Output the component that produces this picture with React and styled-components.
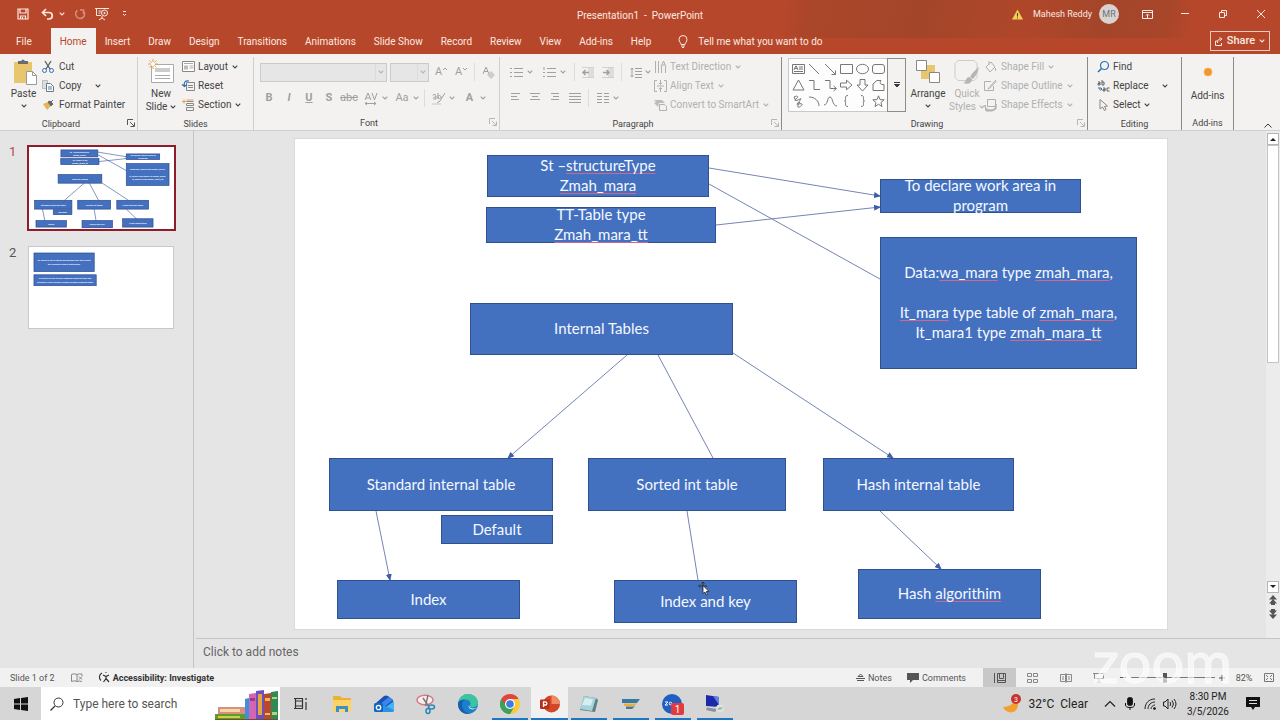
import React from "react";
import styled, { createGlobalStyle, css } from "styled-components";

const GlobalStyle = createGlobalStyle`
  *, *::before, *::after { box-sizing: border-box; }
  body {
    margin: 0;
    background: #e5e5e5;
    color: #3a3a3a;
    font: 10px/14px Roboto, "Noto Sans", sans-serif;
  }
  button, input, select, textarea {
    margin: 0;
    padding: 0;
    border: 0;
    border-radius: 0;
    background: none;
    color: inherit;
    font: inherit;
  }
`;

/* ---------- shared pieces ---------- */

const Page = styled.div`
  display: flex;
  flex-direction: column;
  min-height: 100vh;
`;

const Drawing = styled.svg`
  display: block;
  flex: none;
  overflow: visible;
`;

const Icon = ({ w = 14, h = w, box = `0 0 ${w} ${h}`, children, ...rest }) => (
  <Drawing width={w} height={h} viewBox={box} fill="none" stroke="currentColor" aria-hidden="true" {...rest}>
    {children}
  </Drawing>
);

const Chevron = () => (
  <Icon w={6} h={4}>
    <path d="M.7 .6 3 3 5.300 .6" strokeWidth="1.100" />
  </Icon>
);

const Row = styled.div`
  display: flex;
  align-items: center;
  gap: ${(p) => p.$gap || 0}px;
`;

/* ---------- title bar and tabs ---------- */

const Header = styled.header`
  color: #fbe9e2;
  background:
    linear-gradient(100deg, transparent 61%, rgba(60, 60, 40, 0.1) 63%, rgba(60, 60, 40, 0.16) 72%, rgba(60, 60, 40, 0.06) 80%, rgba(60, 60, 40, 0.16) 86%, rgba(60, 60, 40, 0.12) 91%, transparent 93%) 0 0 / 100% 38px no-repeat,
    #b7472a;
`;

const TitleBar = styled.div`
  display: grid;
  grid-template-columns: 1fr auto 1fr;
  align-items: center;
  height: 28px;
`;

const DocumentTitle = styled.span`
  padding-top: 3px;
`;

const QuickAccess = styled.div`
  display: flex;
  align-items: center;
  gap: 5px;
  padding-left: 12px;
`;

const BarButton = styled.button`
  display: flex;
  align-items: center;
  justify-content: center;
  gap: 5px;
  width: ${(p) => p.$w || 22}px;
  height: 22px;
  opacity: ${(p) => (p.disabled ? 0.45 : 1)};
`;

const WindowTools = styled.div`
  display: flex;
  align-items: center;
  justify-content: flex-end;
`;

const Account = styled.button`
  display: flex;
  align-items: center;
  gap: 10px;
  margin-right: 9px;
  font-size: 9px;
`;

const Avatar = styled.span`
  width: 20px;
  height: 20px;
  border-radius: 50%;
  background: #d8d3d1;
  color: #6d7478;
  font-size: 9px;
  line-height: 20px;
  text-align: center;
`;

const TabBar = styled.nav`
  display: flex;
  align-items: stretch;
  height: 26px;
  padding-left: 7px;
`;

const Tab = styled.button`
  padding: 2px 9px 0;
  white-space: nowrap;
  ${(p) =>
    p.$file &&
    css`
      margin-right: 10px;
    `}
  ${(p) =>
    p.$active &&
    css`
      background: #f3f2f1;
      color: #b7472a;
    `}
`;

const TellMe = styled.label`
  display: flex;
  align-items: center;
  flex: 1;
  gap: 10px;
  padding: 1px 0 0 18px;

  input {
    width: 180px;
    outline: 0;
  }
  input::placeholder {
    color: #fbe9e2;
    opacity: 1;
  }
`;

const ShareButton = styled.button`
  display: flex;
  align-items: center;
  justify-content: center;
  gap: 4px;
  align-self: center;
  width: 60px;
  height: 20px;
  margin-right: 10px;
  border: 1px solid #f0c9bc;
  font-size: 11px;
  font-weight: 500;
`;

/* ---------- ribbon ---------- */

const Ribbon = styled.section`
  display: flex;
  height: 77px;
  background: #f3f2f1;
  border-bottom: 1px solid #cfcfcf;
`;

const GroupBox = styled.div`
  display: flex;
  flex: none;
  flex-direction: column;
  width: ${(p) => p.$w}px;
  margin: 3px 0 0;
  border-right: 1px solid ${(p) => (p.$dark ? "#8a8a8a" : "#cfcfcf")};
`;

const GroupBody = styled.div`
  display: flex;
  height: 57px;
  padding-left: ${(p) => p.$pad || 0}px;
`;

const GroupFoot = styled.div`
  display: flex;
  flex: 1;
  align-items: center;
  justify-content: center;
  position: relative;
  padding: 3px ${(p) => (p.$launcher ? 15 : 0)}px 0 0;
  color: #444;
  font-size: 9px;
`;

const Launcher = styled.button`
  position: absolute;
  right: 2px;
  top: 5px;
  color: ${(p) => (p.$dim ? "#b5b5b5" : "#555")};
`;

const Stack = styled.div`
  display: flex;
  flex-direction: column;
`;

const Command = styled.button`
  display: flex;
  align-items: center;
  gap: ${(p) => p.$gap || 3}px;
  height: 19px;
  white-space: nowrap;
  color: ${(p) => (p.disabled ? "#b0b0b0" : "#444")};
`;

const Spread = styled.span`
  padding-left: ${(p) => p.$by}px;
`;

const BigButton = styled.button`
  display: flex;
  flex: none;
  flex-direction: column;
  align-items: center;
  width: ${(p) => p.$w}px;
  padding-top: 2px;
  line-height: 13px;
  color: ${(p) => (p.disabled ? "#b0b0b0" : "#444")};

  svg { margin-bottom: 2px; }
  svg:last-child { margin: 4px 0 0; }
`;

const Inline = styled.span`
  display: flex;
  align-items: center;
  gap: 3px;
  && svg { margin: 0; }
`;

const ToolRows = styled.div`
  display: flex;
  flex-direction: column;
  gap: 8px;
  padding-top: 6px;
`;

const ToolRow = styled.div`
  display: flex;
  align-items: center;
  gap: 2px;
  height: 18px;
`;

const Tool = styled.button`
  display: flex;
  align-items: center;
  justify-content: center;
  gap: ${(p) => p.$gap || 4}px;
  width: ${(p) => p.$w || 18}px;
  height: 18px;
  color: #a0a0a0;
  font-size: 11px;
  font-weight: ${(p) => (p.$bold ? 700 : 400)};
  font-style: ${(p) => (p.$italic ? "italic" : "normal")};
  text-decoration: ${(p) => p.$line || "none"};
`;

const Divider = styled.span`
  width: 1px;
  height: 18px;
  margin: 0 2px;
  background: #dcdcdc;
`;

const ComboBox = styled.span`
  display: flex;
  align-items: center;
  width: ${(p) => p.$w}px;
  height: 19px;
  margin-right: 1px;
  padding-right: 2px;
  border: 1px solid #cbcbcb;
  background: #e6e6e6;
  color: #b5b5b5;

  select {
    flex: 1;
    min-width: 0;
    height: 17px;
    margin-right: 2px;
    border-right: 1px solid #d6d6d6;
    appearance: none;
  }
`;

const Gallery = styled.div`
  display: grid;
  grid-template-columns: repeat(6, 16px);
  grid-template-rows: repeat(3, 16px);
  width: 99px;
  height: 54px;
  margin-top: 1px;
  padding: 2px 1px;
  border: 1px solid #c9c9c9;
  border-right: 0;
  background: #fdfdfd;
  color: #777;
`;

const ShapeButton = styled.button`
  display: grid;
  place-items: center;
`;

const GalleryMore = styled.button`
  display: grid;
  place-items: center;
  width: 19px;
  height: 54px;
  margin-top: 1px;
  border: 1px solid #8c8c8c;
`;

const CollapseRibbon = styled.button`
  align-self: flex-end;
  margin: 0 8px 2px auto;
`;

const Group = ({ label, w, pad, launcher, dim, dark, children }) => (
  <GroupBox $w={w} $dark={dark} role="group" aria-label={label}>
    <GroupBody $pad={pad}>{children}</GroupBody>
    <GroupFoot $launcher={launcher}>
      {label}
      {launcher && (
        <Launcher $dim={dim} aria-label={`${label} settings`}>
          <Icon w={8}>
            <path d="M.5 6V.5H6M3 3l4 4M7.5 3.500v4h-4" />
          </Icon>
        </Launcher>
      )}
    </GroupFoot>
  </GroupBox>
);

const Lines = ({ rows, w = 12, h = 10 }) => (
  <Icon w={w} h={h}>
    {rows.map(([a, b], i) => (
      <path key={i} d={`M${a} ${i * 3 + 0.5}H${b}`} />
    ))}
  </Icon>
);

const shapes = [
  ["Text box", <><path d="M.5 1.500h12v9H.5zM7 4h4M7 6h4M2 8.500h9" /><path d="M2 7l1.700-4h.6L6 7M3 5.500h2" /></>],
  ["Line", <path d="M1 1l10 10" />],
  ["Arrow line", <><path d="M1 1l10 10M11.500 7.500v4h-4" /></>],
  ["Rectangle", <path d="M.5 1.500h12v9H.5z" />],
  ["Ellipse", <ellipse cx="6.500" cy="6" rx="6" ry="4.700" />],
  ["Rounded rectangle", <rect x=".5" y="1.500" width="12" height="9" rx="2.500" />],
  ["Triangle", <path d="M6.500 1l5.500 10H1z" />],
  ["Elbow", <path d="M1 1.500h5v9h6" />],
  ["Elbow arrow", <path d="M1 1.500h5v8h6M9.500 7l3 2.500-3 2.500" />],
  ["Right arrow", <path d="M.5 4h6V1.200L12 6l-5.500 4.800V8h-6z" />],
  ["Down arrow", <path d="M4 .5v5.500H1L6.500 12 12 6H9V.5z" />],
  ["Freeform", <path d="M1 11.500V5l4-3.500h4c-2 3 0 4.500 3 4v6z" />],
  ["Scribble", <path d="M2 2c4-2 5 0 2 2s1 2 4 0-2 4-3 5 4-1 5 0-3 4-4 3 1-4 2-5M2 2l2 4" />],
  ["Curve", <path d="M1 2c6 0 10 4 10 9" />],
  ["Arc", <path d="M0 10c4 0 3-8 6-8s2 9 7 9" />],
  ["Left brace", <path d="M8 .5C3 .5 7.500 6 4.500 6 7.500 6 3 11.500 8 11.500" />],
  ["Right brace", <path d="M5 .5c5 0 .5 5.500 3.500 5.500C5.500 6 10 11.500 5 11.500" />],
  ["Star", <path d="M6.500.8 8 4.600l4.200.2-3.200 2.700 1 4-3.500-2.200L3 11.500l1-4L.8 4.800 5 4.600z" />],
];

/* ---------- slide data ---------- */

const nodes = [
  { x: 192, y: 16, w: 222, h: 42, lines: ["St –~structureType~", "~Zmah_mara~"] },
  { x: 191, y: 68, w: 230, h: 36, lines: ["TT-Table type", "~Zmah_mara_tt~"] },
  { x: 585, y: 40, w: 201, h: 34, lines: ["To declare work area in", "program"] },
  { x: 585, y: 98, w: 257, h: 132, lines: ["Data:~wa_mara~ type ~zmah_mara~,", "", "~It_mara~ type table of ~zmah_mara~,", "It_mara1 type ~zmah_mara_tt~"] },
  { x: 175, y: 164, w: 263, h: 52, lines: ["Internal Tables"] },
  { x: 34, y: 319, w: 224, h: 53, lines: ["Standard internal table"] },
  { x: 146, y: 376, w: 112, h: 29, lines: ["Default"] },
  { x: 293, y: 319, w: 198, h: 53, lines: ["Sorted int table"] },
  { x: 528, y: 319, w: 191, h: 53, lines: ["Hash internal table"] },
  { x: 42, y: 441, w: 183, h: 39, lines: ["Index"] },
  { x: 319, y: 441, w: 183, h: 43, lines: ["Index and key"] },
  { x: 563, y: 430, w: 183, h: 50, lines: ["Hash ~algorithim~"] },
];

const links = [
  { d: [414, 29, 585, 57], arrow: true },
  { d: [414, 45, 585, 140] },
  { d: [421, 86, 585, 68], arrow: true },
  { d: [332, 216, 213, 319], arrow: true },
  { d: [363, 216, 418, 319] },
  { d: [438, 214, 598, 319], arrow: true },
  { d: [81, 372, 95, 441], arrow: true },
  { d: [392, 372, 403, 441] },
  { d: [585, 372, 646, 430], arrow: true },
];

const secondSlide = [
  { x: 30, y: 36, w: 365, h: 113, lines: ["To allow in any system workbench will work with", "the allocate others instructed."] },
  { x: 30, y: 168, w: 377, h: 66, lines: ["To select in the typical instance was not give the", "problem if the record is using formed element table"] },
];

const plain = (line) => line.replaceAll("~", "");

const Connectors = ({ id }) => (
  <>
    <defs>
      <marker id={id} markerWidth="7" markerHeight="6" refX="6" refY="3" orient="auto" markerUnits="userSpaceOnUse">
        <path d="M0 0l7 3-7 3z" fill="#3f5fa8" stroke="none" />
      </marker>
    </defs>
    {links.map(({ d, arrow }) => (
      <line key={d.join()} x1={d[0]} y1={d[1]} x2={d[2]} y2={d[3]} markerEnd={arrow ? `url(#${id})` : undefined} />
    ))}
  </>
);

/* ---------- workspace ---------- */

const Workspace = styled.main`
  display: grid;
  grid-template-columns: 194px minmax(0, 1fr);
  flex: 1;
  background: #e5e5e5;
`;

const SlideList = styled.aside`
  display: flex;
  flex-direction: column;
  gap: 15px;
  padding: 14px 0 0 9px;
  border-right: 1px solid #c4c4c4;
`;

const SlideItem = styled.button`
  display: flex;
  align-items: flex-start;
  gap: 11px;
  color: ${(p) => (p.$active ? "#b04a55" : "#555")};
  font-size: 13px;
  line-height: 13px;
`;

const ThumbFrame = styled.span`
  border: ${(p) => (p.$active ? "2px solid #8e1c2b" : "1px solid #c9c9c9")};
  margin-left: ${(p) => (p.$active ? 0 : 1)}px;
  background: #fff;
`;

const Thumb = styled.svg`
  display: block;
  width: ${(p) => (p.$active ? 145 : 144)}px;
  height: ${(p) => (p.$active ? 82 : 81)}px;
  font-family: Lato, sans-serif;
  font-size: 15px;
  font-weight: 700;
`;

const Thumbnail = ({ items, active }) => (
  <ThumbFrame $active={active}>
    <Thumb $active={active} viewBox="0 0 872 490" aria-hidden="true">
      {active && (
        <g stroke="#4a62a0" strokeWidth="4">
          <Connectors id="thumb-arrow" />
        </g>
      )}
      {items.map((n) => (
        <g key={n.x + "-" + n.y}>
          <rect x={n.x} y={n.y} width={n.w} height={n.h} fill="#4470c0" stroke="#2c4a8a" strokeWidth="4" />
          {n.lines.map((line, i) => (
            <text key={i} x={n.x + n.w / 2} y={n.y + n.h / 2 + 5 + (i - (n.lines.length - 1) / 2) * 20} textAnchor="middle" fill="#fff">
              {plain(line)}
            </text>
          ))}
        </g>
      ))}
    </Thumb>
  </ThumbFrame>
);

const Editor = styled.div`
  display: flex;
  flex-direction: column;
  padding-left: 2px;
`;

const Stage = styled.div`
  display: flex;
  flex: 1;
`;

const Canvas = styled.div`
  display: flex;
  flex: 1;
  align-items: flex-start;
  justify-content: center;
  min-width: 0;
  padding: 8px 0;
  overflow: hidden;
`;

const Slide = styled.article`
  position: relative;
  flex: none;
  width: 872px;
  height: 490px;
  background: #fff;
  outline: 1px solid #dadada;
`;

const LinkLayer = styled.svg`
  position: absolute;
  inset: 0;
  width: 100%;
  height: 100%;
  stroke: #7485b4;
`;

const Node = styled.div`
  position: absolute;
  left: ${(p) => p.$x}px;
  top: ${(p) => p.$y}px;
  width: ${(p) => p.$w}px;
  height: ${(p) => p.$h}px;
  display: flex;
  flex-direction: column;
  align-items: center;
  justify-content: center;
  padding-bottom: 2px;
  border: 1px solid #2f528f;
  background: #4470c0;
  color: #f4f8ff;
  font: 15px/20px Lato, sans-serif;
  white-space: nowrap;
`;

const NodeLine = styled.div`
  flex: none;
  height: 20px;
`;

const Misspelt = styled.span`
  text-decoration: underline solid #d0688c 1px;
  text-underline-offset: 2px;
  text-decoration-skip-ink: none;
`;

const Pointer = styled(Drawing)`
  position: absolute;
  left: 403px;
  top: 443px;
`;

const ScrollBar = styled.div`
  display: flex;
  flex-direction: column;
  align-items: center;
  width: 14px;
  padding: 2px 0 17px;
  background: #ececec;
`;

const ScrollButton = styled.button`
  display: grid;
  place-items: center;
  width: 12px;
  height: ${(p) => (p.$jump ? 14 : 12)}px;
  border: ${(p) => (p.$jump ? 0 : "1px solid #b5b5b5")};
  background: ${(p) => (p.$jump ? "none" : "#fff")};
  color: #333;
`;

const ScrollTrack = styled.div`
  flex: 1;
  width: 12px;
`;

const ScrollThumb = styled.div`
  height: 50%;
  border: 1px solid #c4c4c4;
  background: #fff;
`;

const Notes = styled.input`
  height: 30px;
  padding: 0 7px 3px;
  border-top: 1px solid #c4c4c4;
  font-size: 12px;
  &::placeholder { color: #666; opacity: 1; }
`;

/* ---------- status bar ---------- */

const StatusBar = styled.footer`
  position: relative;
  display: flex;
  align-items: center;
  height: 19px;
  background: #f2f1f1;
  font-size: 9px;
  color: #555;
`;

const StatusButton = styled.button`
  display: flex;
  align-items: center;
  justify-content: center;
  gap: 3px;
  height: 19px;
  width: ${(p) => (p.$w ? `${p.$w}px` : "auto")};
  margin-left: ${(p) => p.$ml || 0}px;
  background: ${(p) => (p.$active ? "#c8c8c8" : "none")};
  font-weight: ${(p) => (p.$bold ? 700 : 400)};
  color: ${(p) => (p.$bold ? "#333" : "#555")};
`;

const SlideCount = styled.span`
  padding-left: 10px;
`;

const StatusEnd = styled.div`
  display: flex;
  align-items: center;
  margin-left: auto;
`;

const ZoomSlider = styled.input`
  width: 84px;
  height: 12px;
  appearance: none;
  background: linear-gradient(#777, #777) center / 100% 1px no-repeat;
  &::-webkit-slider-thumb {
    appearance: none;
    width: 4px;
    height: 10px;
    background: #555;
  }
`;

const Watermark = styled.div`
  position: absolute;
  right: 48px;
  bottom: 6px;
  color: rgba(255, 255, 255, 0.6);
  font: 400 58px/40px Lato, sans-serif;
  -webkit-text-stroke: 1px rgba(255, 255, 255, 0.6);
  pointer-events: none;
`;

/* ---------- taskbar ---------- */

const TaskBar = styled.nav`
  display: flex;
  align-items: stretch;
  height: 33px;
  background: #d6d6d6;
  color: #222;
`;

const StartButton = styled.button`
  display: grid;
  place-items: center;
  width: 41px;
`;

const SearchBox = styled.label`
  display: flex;
  align-items: center;
  gap: 9px;
  width: 239px;
  padding-left: 9px;
  overflow: hidden;
  background: #fff;

  input {
    flex: 1;
    min-width: 0;
    outline: 0;
    font-size: 12px;
  }
  input::placeholder { color: #555; opacity: 1; }
`;

const AppRow = styled.div`
  display: flex;
  flex: 0 1 415px;
`;

const TaskButton = styled.button`
  display: grid;
  flex: ${(p) => (p.$w ? "none" : "1")};
  place-items: center;
  width: ${(p) => p.$w}px;
  background: ${(p) => (p.$active ? "#f1f1f1" : "none")};
  box-shadow: ${(p) => (p.$open ? "inset 0 -2px #1f74c4" : "none")};
  border: solid transparent;
  border-width: 0 ${(p) => (p.$active ? 0 : 3)}px;
  background-clip: padding-box;
`;

const Tray = styled.div`
  display: flex;
  align-items: center;
  gap: 4px;
  margin-left: auto;
  padding-right: 19px;
`;

const Weather = styled.button`
  display: flex;
  align-items: center;
  gap: 7px;
  margin-right: 10px;
  font-size: 12px;
  white-space: pre;
`;

const TrayButton = styled.button`
  display: grid;
  place-items: center;
  width: 16px;
  height: 24px;
`;

const Clock = styled.time`
  width: 48px;
  margin: 0 9px 0 2px;
  font-size: 10px;
  line-height: 15px;
  text-align: center;
`;

const FolderIcon = () => (
  <Icon w={20} h={18} stroke="none">
    <path d="M1 1h7l2 2h9v13H1z" fill="#e9b233" />
    <path d="M1 5h18v12H1z" fill="#fbd367" />
    <path d="M4 17v-6h12v6h-3v-3H7v3z" fill="#3f8fc7" />
  </Icon>
);
const OutlookIcon = () => (
  <Icon w={20} h={18} stroke="none">
    <path d="M2 8 10 1q2-1 4 0l5 4v11H4z" fill="#1d4fb8" />
    <path d="M6 9 15 2l4 3-9 7z" fill="#3b86e8" />
    <path d="M5 17 20 6v9q0 2-2 2z" fill="#45b4f2" />
    <path d="M9 10l11 5q0 2-2 2H7z" fill="#2a93e4" />
    <rect x="0" y="8" width="9" height="9" rx="1.500" fill="#1266c0" />
    <circle cx="4.500" cy="12.500" r="2.200" stroke="#fff" strokeWidth="1.300" />
  </Icon>
);
const SnipIcon = () => (
  <Icon w={20} h={20}>
    <ellipse cx="9" cy="6" rx="8" ry="4.800" stroke="#d77a86" strokeWidth="1.500" fill="#f7eeee" />
    <path d="M12 1 9.500 12M7 4l6 9" stroke="#777" strokeWidth="1.400" />
    <ellipse cx="12" cy="17" rx="2" ry="2.500" stroke="#2b88b8" strokeWidth="1.500" />
    <ellipse cx="15.500" cy="13" rx="3" ry="1.900" stroke="#2b88b8" strokeWidth="1.500" />
  </Icon>
);
const EdgeIcon = () => (
  <Icon w={20} h={20} stroke="none">
    <circle cx="10" cy="10" r="10" fill="#1b7fc9" />
    <path d="M.5 8C2 2.500 6 0 10 0c6 0 10 4 10 8.500 0 3.500-3 5-6 5-2 0-3-1-2-2 2-3-1-6-4.500-6C4 5.500 1.500 6.500.5 8z" fill="#3cc4a0" />
    <path d="M.5 8C2 6.500 4 5.500 7 5.500c-3 2-3.500 5-2.500 8s4 6 8 6C6 21.500 0 17 0 10z" fill="#1560ae" />
    <path d="M11.500 11c-1 2 1 3.500 4 3.500 2 0 3-.5 4-1 0 0-3 3-7 1.500-2-.8-2.500-3-1-4z" fill="#e6eef2" />
  </Icon>
);
const ChromeIcon = () => (
  <Icon w={20} h={20} stroke="none">
    <path d="M10 10 1.340 5A10 10 0 0 1 18.660 5z" fill="#e0443a" />
    <path d="M10 10 18.660 5A10 10 0 0 1 10 20z" fill="#f9c83c" />
    <path d="M10 10 10 20A10 10 0 0 1 1.340 5z" fill="#3ba358" />
    <path d="M10 5h8.660l-3.500 7z" fill="#f9c83c" />
    <path d="M14.330 12.500 10 20l-3-6z" fill="#3ba358" />
    <path d="M5.670 12.500 1.340 5 10 5z" fill="#e0443a" />
    <path d="M5.670 12.500 1.340 5A10 10 0 0 0 10 20l2-4z" fill="#3ba358" />
    <circle cx="10" cy="10" r="5" fill="#fff" />
    <circle cx="10" cy="10" r="3.800" fill="#3b7de0" />
  </Icon>
);
const PowerPointIcon = () => (
  <Icon w={20} h={18} stroke="none">
    <circle cx="11.500" cy="9" r="8.500" fill="#d24726" />
    <path d="M11.500.5A8.500 8.500 0 0 1 20 9h-8.500z" fill="#f08a63" />
    <rect x="0" y="4.500" width="9.500" height="9.500" rx="1" fill="#b7301c" />
    <path d="M3.500 12V6.800h1.800a1.500 1.500 0 0 1 0 3.200H3.500" stroke="#fff" strokeWidth="1.300" />
  </Icon>
);
const NotepadIcon = () => (
  <Icon w={20} h={18} stroke="none">
    <path d="M5 1l12 2 2 2-3 12L1 15z" fill="#5f7f86" />
    <path d="M5 1l12 2-4 13L1 14z" fill="#a6d3da" />
    <path d="M6 3l8 1.500-2 6L3 10z" fill="#d6eef0" />
  </Icon>
);
const SapIcon = () => (
  <Icon w={20} h={12} stroke="none">
    <path d="M1 1h18l-3 4H1z" fill="#3679a8" />
    <path d="M3 5.500h13L13 8H3z" fill="#e8b23a" />
    <path d="M5 8.500h9L11 11H5z" fill="#56748c" />
  </Icon>
);
const MeetingIcon = () => (
  <Icon w={22} h={20} stroke="none">
    <circle cx="10" cy="10" r="10" fill="#1f5fc4" />
    <path d="M3 8h3L3 11h3" stroke="#fff" />
    <circle cx="8.500" cy="9.500" r="1.300" stroke="#fff" />
    <rect x="9" y="9" width="13" height="12" rx="2" fill="#e23b3f" />
    <text x="15.500" y="19" textAnchor="middle" fill="#fff" fontSize="10">1</text>
  </Icon>
);
const RemoteIcon = () => (
  <Icon w={20} h={18} stroke="none">
    <path d="M1 0l13 2v10L1 11z" fill="#1b2aa8" />
    <path d="M8 1l6 1v8z" fill="#5b83e0" />
    <path d="M2 12.500l10 1.500-2 3-9-2z" fill="#8a929c" />
    <circle cx="15" cy="13.500" r="4" fill="#dfe3df" />
    <path d="M13 14.500l2-2M15 14.500l2-2" stroke="#3a8d4a" />
  </Icon>
);

const apps = [
  ["File Explorer", FolderIcon],
  ["Outlook", OutlookIcon],
  ["Snipping Tool", SnipIcon],
  ["Edge", EdgeIcon],
  ["Chrome", ChromeIcon, true],
  ["PowerPoint", PowerPointIcon, true, true],
  ["Notepad", NotepadIcon, true],
  ["SAP Logon", SapIcon, true],
  ["Zoom", MeetingIcon, true],
  ["Remote Desktop", RemoteIcon, true],
];

const Books = () => (
  <Icon w={66} h={33} box="0 -3 66 33" stroke="none">
    <path d="M4 17h27v7H4z" fill="#d98d83" /><path d="M6 19h20v3H6z" fill="#f0d9a0" />
    <path d="M1 24h30v6H1z" fill="#5f9c28" /><path d="M4 26h22v2H4z" fill="#c7d34a" />
    <path d="M31 9l4-1v22h-4z" fill="#3d8fe0" />
    <path d="M35 4l7-1v27h-7z" fill="#d266b5" /><path d="M36 8h5v3h-5z" fill="#8f3f8a" />
    <path d="M42 1l8-1v30h-8z" fill="#6b4fc4" /><path d="M44 4h4v21h-4z" fill="#e4a63c" />
    <path d="M50 4l7-1v27h-7z" fill="#b9482f" /><path d="M51 8h5v3h-5zM51 23h5v2h-5z" fill="#edbb5a" />
    <path d="M57 2l7-1v29h-7z" fill="#2f8a55" /><path d="M58 7h5v2h-5zM58 22h5v3h-5z" fill="#b6d477" />
    <path d="M1 29h63v1H1z" fill="#76502a" />
  </Icon>
);

/* ---------- assembled areas ---------- */

const tabs = ["Insert", "Draw", "Design", "Transitions", "Animations", "Slide Show", "Record", "Review", "View", "Add-ins", "Help"];

const TopBar = () => (
  <Header>
    <TitleBar>
      <QuickAccess>
        <BarButton aria-label="Save">
          <Icon w={12}><path d="M1 1h10v10H1zM3 1v4h6V1M3.500 11V8h5v3M5.500 9v2" strokeWidth="1.200" /></Icon>
        </BarButton>
        <BarButton $w={28} aria-label="Undo">
          <Icon w={13} h={12}><path d="M5 1 1.500 4.500 5 8M1.500 4.500H8a3.200 3.200 0 0 1 0 6.500H6" strokeWidth="1.700" /></Icon>
          <Chevron />
        </BarButton>
        <BarButton $w={16} disabled aria-label="Redo">
          <Icon w={12}><path d="M3.500 2.300A4.500 4.500 0 1 0 9 2.500M9.500 6V2H6" strokeWidth="1.500" /></Icon>
        </BarButton>
        <BarButton $w={18} aria-label="Start from beginning">
          <Icon w={14}><path d="M0 1.500h14M1.500 1.500v7H6M7 9v3M4 13l3-2 3 2M3.500 4h3M3.500 6h2" /><circle cx="9.500" cy="6" r="3" /><path d="M8.700 4.500v3l2.300-1.500z" fill="currentColor" stroke="none" /></Icon>
        </BarButton>
        <BarButton $w={16} aria-label="Customize quick access">
          <Icon w={5} h={6}><path d="M1 .5h3M1 3l1.500 1.500L4 3" /></Icon>
        </BarButton>
      </QuickAccess>
      <DocumentTitle>Presentation1&nbsp; -&nbsp; PowerPoint</DocumentTitle>
      <WindowTools>
        <Account>
          <Icon w={11} h={11} stroke="none"><path d="M5.500.5 11 10.500H0z" fill="#f3cf56" /><path d="M5 4h1v3.500H5zM5 8.500h1v1H5z" fill="#4a3a10" /></Icon>
          <Row $gap={7}><span>Mahesh Reddy</span><Avatar>MR</Avatar></Row>
        </Account>
        <BarButton $w={38} aria-label="Ribbon display options">
          <Icon w={11} h={9}><path d="M.5.5h10v8H.5zM.5 2.500h10M5.500 8V4.500M4 5.500l1.500-1.500L7 5.500" /></Icon>
        </BarButton>
        <BarButton $w={38} aria-label="Minimize"><Icon w={8} h={2}><path d="M0 .5h8" /></Icon></BarButton>
        <BarButton $w={38} aria-label="Restore"><Icon w={8} h={8}><path d="M.5 2.500h5v5h-5zM2.500 2.500v-2h5v5h-2" /></Icon></BarButton>
        <BarButton $w={38} aria-label="Close"><Icon w={8}><path d="M0 0l8 8M8 0L0 8" /></Icon></BarButton>
      </WindowTools>
    </TitleBar>
    <TabBar>
      <Tab $file>File</Tab>
      <Tab $active>Home</Tab>
      {tabs.map((t) => <Tab key={t}>{t}</Tab>)}
      <TellMe>
        <Icon w={10} h={13}><path d="M3 9.500C3 7.500 1 7 1 4.500a4 4 0 0 1 8 0C9 7 7 7.500 7 9.500zM3 11h4M4 12.500h2" /></Icon>
        <input aria-label="Tell me what you want to do" placeholder="Tell me what you want to do" />
      </TellMe>
      <ShareButton>
        <Icon w={8} h={9}><path d="M2.500 4H.5v4.500h6V6M2.500 6c0-3 1-4 3-4M4.500.5 7 2 4.500 4" /></Icon>
        Share
        <Chevron />
      </ShareButton>
    </TabBar>
  </Header>
);

const AlignLines = [
  ["Align left", [[2, 11], [2, 8], [2, 10]]],
  ["Center", [[1, 11], [3, 9], [1, 11]]],
  ["Align right", [[2, 10], [4, 10], [2, 10]]],
  ["Justify", [[0, 12], [0, 12], [0, 12], [0, 12]]],
];

const RibbonBar = () => (
  <Ribbon>
    <Group label="Clipboard" w={138} pad={5} launcher>
      <BigButton $w={37}>
        <Icon w={26} h={26} stroke="none">
          <path d="M3 3h18v21H3z" fill="#e8c66e" />
          <path d="M7 5V2h3q2-3 4 0h3v3z" fill="#6b6b6b" />
          <path d="M15.500 12.500h6l4 4v9h-10z" fill="#fff" stroke="#999" />
          <path d="M21.500 12.500v4h4" stroke="#999" />
        </Icon>
        Paste
        <Chevron />
      </BigButton>
      <Stack>
        <Command $gap={5}>
          <Icon w={12}><path d="M3 0l5 8M9 0 4 8" stroke="#555" strokeWidth="1.200" /><circle cx="2.500" cy="9.500" r="2" stroke="#2f6fb3" /><circle cx="9.500" cy="9.500" r="2" stroke="#2f6fb3" /></Icon>
          Cut
        </Command>
        <Command $gap={5}>
          <Icon w={12}><path d="M.5.5h5v8h-5z" fill="#ddd" stroke="#bbb" /><path d="M4.500 3.500h4l3 3v5h-7zM6 7h4M6 9h4" stroke="#5d7893" fill="#fff" /></Icon>
          Copy
          <Spread $by={8}><Chevron /></Spread>
        </Command>
        <Command $gap={5}>
          <Icon w={12}><path d="M1 5l5-2 3 4-4 4z" fill="#e4b659" stroke="none" /><path d="M6 3l3 4 2-2-3-3zM9 3l2-2" fill="#666" stroke="#666" /></Icon>
          Format Painter
        </Command>
      </Stack>
    </Group>

    <Group label="Slides" w={116} pad={2}>
      <BigButton $w={42}>
        <Icon w={26} h={26}>
          <path d="M3.500 5.500h22v18h-22z" fill="#fff" stroke="#aaa" />
          <path d="M7 9h15v4H7z" fill="#ccc" stroke="none" />
          <path d="M7 16.500h15M7 19.500h15" stroke="#aaa" />
          <path d="M5 0v10M0 5h10M1.500 1.500l7 7M8.500 1.500l-7 7" stroke="#e3a34a" />
          <circle cx="5" cy="5" r="2" fill="#fff" stroke="none" />
        </Icon>
        New
        <Inline>Slide <Chevron /></Inline>
      </BigButton>
      <Stack>
        <Command>
          <Icon w={13} h={11}><path d="M.5.5h12v10H.5z" fill="#fff" stroke="#888" /><path d="M2 2.500h9M7.500 5h4M7.500 7h4" stroke="#aaa" /><path d="M2 4.500h4v4H2z" fill="#bbb" stroke="none" /></Icon>
          <Row $gap={4}>Layout <Chevron /></Row>
        </Command>
        <Command>
          <Icon w={13} h={12}><path d="M4.500 2.500h8v8h-8zM6 5.500h5M6 7.500h5" stroke="#888" /><path d="M7 1C3 0 1.500 3 2.500 6M0 4.500l2.500 2L5 4.500" stroke="#2f6fb3" strokeWidth="1.200" /></Icon>
          Reset
        </Command>
        <Command>
          <Icon w={13} h={12}><path d="M4.500 2.500h7M4.500 4.500h7v2h-7zM4.500 8.500h7v3h-7z" stroke="#888" /><path d="M0 2.500h4M2 .5v4M4.500 1h7" stroke="#e3a34a" /></Icon>
          <Row $gap={4}>Section <Chevron /></Row>
        </Command>
      </Stack>
    </Group>

    <Group label="Font" w={246} pad={6} launcher dim>
      <ToolRows>
        <ToolRow>
          <ComboBox $w={127}><select disabled aria-label="Font name"><option /></select><Chevron /></ComboBox>
          <ComboBox $w={39}><select disabled aria-label="Font size"><option /></select><Chevron /></ComboBox>
          <Tool disabled $gap={1} aria-label="Increase font size">A<Icon w={4} h={10}><path d="M0 3l2-2 2 2" /></Icon></Tool>
          <Tool disabled $gap={1} aria-label="Decrease font size">A<Icon w={4} h={10}><path d="M0 1l2 2 2-2" /></Icon></Tool>
          <Divider />
          <Tool disabled aria-label="Clear formatting">
            <Icon w={13} h={13}><path d="M1 8 4 1l3 7M2 5.500h4" /><path d="M5 9l4-4 4 4-4 4z" fill="#ccc" stroke="none" /></Icon>
          </Tool>
        </ToolRow>
        <ToolRow>
          <Tool disabled $bold aria-label="Bold">B</Tool>
          <Tool disabled $bold $italic aria-label="Italic">I</Tool>
          <Tool disabled $bold $line="underline" aria-label="Underline">U</Tool>
          <Tool disabled $bold aria-label="Text shadow">S</Tool>
          <Tool disabled $line="line-through" aria-label="Strikethrough">abc</Tool>
          <Tool disabled $w={32} aria-label="Character spacing">
            <Icon w={14} h={13}><path d="M1 8 4 1l3 7M2 6h4M8 1l2.500 7L13 1M1 11.500h11M3 10l-2 1.500L3 13M10 10l2 1.500-2 1.500" /></Icon>
            <Chevron />
          </Tool>
          <Tool disabled $w={26} aria-label="Change case">Aa<Chevron /></Tool>
          <Divider />
          <Tool disabled $w={28} aria-label="Highlight colour">
            <Icon w={13}><path d="M1 3.500C1 2 4 2 4 4v3C1 8 0 5 4 5M6 1v6M6 5c0-2 3-2 3 0s-3 2-3 0M13 1 8 9l-3 2" /><path d="M0 11h9v2H0z" fill="#ddd" stroke="none" /></Icon>
            <Chevron />
          </Tool>
          <Tool disabled $bold $w={34} aria-label="Font colour">A<Spread $by={3}><Chevron /></Spread></Tool>
        </ToolRow>
      </ToolRows>
    </Group>

    <Group label="Paragraph" w={282} pad={6} launcher dim dark>
      <ToolRows>
        <ToolRow>
          <Tool disabled $w={30} aria-label="Bullets">
            <Icon w={13} h={11}><path d="M4 1.500h9M4 5.500h9M4 9.500h9M0 1.500h2M0 5.500h2M0 9.500h2" /></Icon><Chevron />
          </Tool>
          <Tool disabled $w={32} aria-label="Numbering">
            <Icon w={13} h={11}><path d="M4 1.500h9M4 5.500h9M4 9.500h9M1 0v3M0 5.500h2M0 9.500h2" /></Icon><Chevron />
          </Tool>
          <Divider />
          <Tool disabled aria-label="Decrease indent">
            <Icon w={12} h={11}><path d="M6 1h6v9H6z" fill="#ddd" stroke="none" /><path d="M7 5.500H1M3.500 3 1 5.500 3.500 8" strokeWidth="1.500" /><path d="M0 .5h12M0 10.500h12" stroke="#d0d0d0" /></Icon>
          </Tool>
          <Tool disabled aria-label="Increase indent">
            <Icon w={12} h={11}><path d="M6 1h6v9H6z" fill="#ddd" stroke="none" /><path d="M1 5.500h6M4.500 3 7 5.500 4.500 8" strokeWidth="1.500" /><path d="M0 .5h12M0 10.500h12" stroke="#d0d0d0" /></Icon>
          </Tool>
          <Divider />
          <Tool disabled $w={28} $gap={3} aria-label="Line spacing">
            <Icon w={12} h={11}><path d="M5 1.500h7M5 4.500h7M5 7.500h7M5 10.500h7M2 1v9M.5 2.500 2 1l1.500 1.500M.5 8.500 2 10l1.500-1.500" /></Icon><Chevron />
          </Tool>
        </ToolRow>
        <ToolRow>
          {AlignLines.map(([name, rows]) => (
            <Tool key={name} disabled aria-label={name}><Lines rows={rows} /></Tool>
          ))}
          <Divider />
          <Tool disabled $w={30} aria-label="Columns">
            <Icon w={12} h={10}><path d="M0 .5h5M7 .5h5M0 3.500h5M7 3.500h5M0 6.500h5M7 6.500h5M0 9.500h5M7 9.500h5" /></Icon><Chevron />
          </Tool>
        </ToolRow>
      </ToolRows>
      <Stack>
        <Command disabled>
          <Icon w={13} h={12}><path d="M1.500 0v12M4.500 0v12M7.500 6v6M11.500 6v6M7 6l2.500-6L12 6M8 4h3" /></Icon>
          <Row $gap={4}>Text Direction <Chevron /></Row>
        </Command>
        <Command disabled>
          <Icon w={13} h={12}><path d="M3 .5H.5v11H3M10 .5h2.500v11H10M3 6h7M6.500 0v4M5 3l1.500 1.500L8 3M6.500 12V8M5 9l1.500-1.500L8 9" /></Icon>
          <Row $gap={4}>Align Text <Chevron /></Row>
        </Command>
        <Command disabled>
          <Icon w={13} h={12}><path d="M0 1h8l3 3H5l-1 4-4-4 2-1z" fill="#bbb" stroke="none" /><path d="M5.500 5.500h5l2 2v4h-7z" fill="#f3f2f1" /></Icon>
          <Row $gap={4}>Convert to SmartArt <Chevron /></Row>
        </Command>
      </Stack>
    </Group>

    <Group label="Drawing" w={306} pad={6} launcher dim dark>
      <Gallery>
        {shapes.map(([name, art]) => (
          <ShapeButton key={name} aria-label={name}><Icon w={13} h={12}>{art}</Icon></ShapeButton>
        ))}
      </Gallery>
      <GalleryMore aria-label="More shapes"><Icon w={6} h={6}><path d="M0 .5h6M.5 2.500 3 5l2.500-2.500z" fill="currentColor" /></Icon></GalleryMore>
      <BigButton $w={44}>
        <Icon w={24} h={26}>
          <path d="M11 6h8v8h-8zM5 12h9v8H5z" fill="#e8c66e" stroke="none" />
          <path d="M.5 1.500h10v10H.5zM13.500 13.500h10v10h-10z" fill="#fff" stroke="#888" />
        </Icon>
        Arrange
        <Chevron />
      </BigButton>
      <BigButton $w={34} disabled>
        <Icon w={26} h={26}>
          <path d="M4 1.500h16l3 3v14l-3 3H4l-3-3v-14z" stroke="#ccc" />
          <path d="M25 8c-4 3-7 6-9 10l3 2c3-3 5-7 6-12zM15 18c-4 1-2 5-6 6 5 2 9 0 9-4z" fill="#b5b5b5" stroke="none" />
        </Icon>
        Quick
        <Inline>Styles <Chevron /></Inline>
      </BigButton>
      <Stack>
        <Command disabled $gap={4}>
          <Icon w={13} h={12}><path d="M2 6l5-5 4 5-5 5zM5 0v4M11.500 7v3" /></Icon>
          <Row $gap={4}>Shape Fill <Chevron /></Row>
        </Command>
        <Command disabled $gap={4}>
          <Icon w={13} h={12}><path d="M7 1.500H.5v9h9V6M12 0 5 7.500 4 9l1.500-.6L12.500 1" /></Icon>
          <Row $gap={4}>Shape Outline <Chevron /></Row>
        </Command>
        <Command disabled $gap={4}>
          <Icon w={13} h={12}><path d="M1 6q0 5 6 5 5 0 5-6v5l-4 2H2z" fill="#bbb" /><path d="M3.500.5h8v7h-8z" fill="#f3f2f1" /></Icon>
          <Row $gap={4}>Shape Effects <Chevron /></Row>
        </Command>
      </Stack>
    </Group>

    <Group label="Editing" w={94} pad={9} dark>
      <Stack>
        <Command>
          <Icon w={13} h={12}><circle cx="7.500" cy="4.500" r="4" stroke="#2f6fb3" strokeWidth="1.200" /><path d="M4.500 7.500 1 11" stroke="#2f6fb3" strokeWidth="1.600" /></Icon>
          Find
        </Command>
        <Command>
          <Icon w={13} h={13}><path d="M1 3h2v3H1V4.500h2M5 1v5h2V3H5M6 9h2v3H6v-1.500h2M12.500 9H10v3h2.500" stroke="#555" strokeWidth=".9" /><path d="M2 8v2h3M3.500 8.500 5 10l-1.500 1.500" stroke="#2f6fb3" /></Icon>
          Replace
          <Spread $by={10}><Chevron /></Spread>
        </Command>
        <Command>
          <Icon w={13} h={12}><path d="M3 .5v9.500l2.500-2 2 3.500 1.500-1-1.500-3L10.500 7z" stroke="#888" /></Icon>
          <Row $gap={4}>Select <Chevron /></Row>
        </Command>
      </Stack>
    </Group>

    <Group label="Add-ins" w={52} dark>
      <BigButton $w={51}>
        <Icon w={26} h={26}><circle cx="13" cy="9" r="4" fill="#f09a2c" stroke="#f6b35c" /></Icon>
        Add-ins
      </BigButton>
    </Group>
    <CollapseRibbon aria-label="Collapse the ribbon"><Icon w={8} h={5}><path d="M.5 4.500 4 1l3.500 3.500" /></Icon></CollapseRibbon>
  </Ribbon>
);

const renderLine = (line) =>
  line.split("~").map((part, i) => (i % 2 ? <Misspelt key={i}>{part}</Misspelt> : part));

const WorkArea = () => (
  <Workspace>
    <SlideList aria-label="Slides">
      <SlideItem $active>1<Thumbnail items={nodes} active /></SlideItem>
      <SlideItem>2<Thumbnail items={secondSlide} /></SlideItem>
    </SlideList>
    <Editor>
      <Stage>
        <Canvas>
          <Slide>
            <LinkLayer aria-hidden="true"><Connectors id="arrow" /></LinkLayer>
            {nodes.map((n) => (
              <Node key={n.lines[0]} $x={n.x} $y={n.y} $w={n.w} $h={n.h}>
                {n.lines.map((line, i) => <NodeLine key={i}>{renderLine(line)}</NodeLine>)}
              </Node>
            ))}
            <Pointer width="13" height="14" viewBox="0 0 13 14" aria-hidden="true">
              <path d="M1 4h8M5 0v8M3.500 1.500 5 0l1.500 1.500M2 2.500.5 4 2 5.500" stroke="#333" fill="none" />
              <path d="M5 3.500v8l2-1.500 1.200 3 1.300-.5-1.200-3H11z" fill="#fff" stroke="#222" strokeWidth=".8" />
            </Pointer>
          </Slide>
        </Canvas>
        <ScrollBar>
          <ScrollButton aria-label="Scroll up"><Icon w={6} h={4} stroke="none"><path d="M0 4l3-3 3 3z" fill="#222" /></Icon></ScrollButton>
          <ScrollTrack><ScrollThumb /></ScrollTrack>
          <ScrollButton aria-label="Scroll down"><Icon w={6} h={4} stroke="none"><path d="M0 0l3 3 3-3z" fill="#222" /></Icon></ScrollButton>
          <ScrollButton $jump aria-label="Previous slide"><Icon w={8} h={10} stroke="none"><path d="M4 0l4 4.500H0zM4 4l4 4.500H6V10H2V8.500H0z" fill="#555" /></Icon></ScrollButton>
          <ScrollButton $jump aria-label="Next slide"><Icon w={8} h={10} stroke="none"><path d="M4 10l4-4.500H0zM4 6l4-4.500H6V0H2v1.500H0z" fill="#555" /></Icon></ScrollButton>
        </ScrollBar>
      </Stage>
      <Notes aria-label="Notes" placeholder="Click to add notes" />
    </Editor>
  </Workspace>
);

const Status = () => (
  <StatusBar>
    <SlideCount>Slide 1 of 2</SlideCount>
    <StatusButton $ml={16} aria-label="Proofing">
      <Icon w={12} h={10}><path d="M6 1.500Q3 0 .5 1.500v7Q3 7 6 8.500zM6 1.500Q8 .5 11 1v2M6 8.500Q8 7.500 11 8.500M8 3.500l3 3M11 3.500l-3 3" stroke="#888" /></Icon>
    </StatusButton>
    <StatusButton $ml={15} $bold>
      <Icon w={12} h={11}><path d="M4 1A4.500 4.500 0 0 0 3 8.500M5 3l3 1.500L11 3M8 4.500v2L5.500 10M8 6.500l3 3.500M7.500.5h1" strokeWidth="1.200" /></Icon>
      Accessibility: Investigate
    </StatusButton>
    <StatusEnd>
      <StatusButton $w={38}>
        <Icon w={9} h={9}><path d="M0 5.500h9M1 7.500h7M2 3.500l2.500-2.500L7 3.500z" /></Icon>
        Notes
      </StatusButton>
      <StatusButton $ml={14}>
        <Icon w={12} h={10} stroke="none"><path d="M0 0h12v7H6L3 10V7H0z" fill="#555" /></Icon>
        Comments
      </StatusButton>
      <StatusButton $ml={17} $w={33} $active aria-label="Normal view">
        <Icon w={12} h={10}><path d="M.5 0v10M3.500.5h8v9h-8zM5.500.5v5h4v-5M3.500 7.500h8" /></Icon>
      </StatusButton>
      <StatusButton $w={33} aria-label="Slide sorter">
        <Icon w={11} h={10}><path d="M.5.5h4v3h-4zM6.500.5h4v3h-4zM.5 6.500h4v3h-4zM6.500 6.500h4v3h-4z" stroke="#888" /></Icon>
      </StatusButton>
      <StatusButton $w={33} aria-label="Reading view">
        <Icon w={12} h={10}><path d="M.5 1.500h5v7h-5zM6.500 1.500h5v7h-5zM6 0v10M2 4h2M8 4h2M2 6h2M8 6h2" stroke="#888" /></Icon>
      </StatusButton>
      <StatusButton $w={33} aria-label="Slide show">
        <Icon w={12} h={10}><path d="M0 .5h12M1.500.5v5h9v-5M6 5.500V9M3.500 9.500h5" stroke="#888" /></Icon>
      </StatusButton>
      <StatusButton $w={16} aria-label="Zoom out"><Icon w={6} h={2}><path d="M0 .5h6" /></Icon></StatusButton>
      <ZoomSlider type="range" min="0" max="100" defaultValue="40" aria-label="Zoom level" />
      <StatusButton $w={14} aria-label="Zoom in"><Icon w={6}><path d="M0 3h6M3 0v6" /></Icon></StatusButton>
      <StatusButton $w={28} $ml={1}>82%</StatusButton>
      <StatusButton $w={22} aria-label="Fit to window">
        <Icon w={10} h={9}><path d="M.5.5h9v8h-9zM2 2l2 2M8 2 6 4M2 7l2-2M8 7 6 5" stroke="#777" /></Icon>
      </StatusButton>
    </StatusEnd>
    <Watermark>zoom</Watermark>
  </StatusBar>
);

const WindowsBar = () => (
  <TaskBar>
    <StartButton aria-label="Start">
      <Icon w={14} stroke="none"><path d="M0 2l6-1v5.500H0zM7 .9 14 0v6.500H7zM0 7.500h6V13l-6-1zM7 7.500h7V14l-7-.9z" fill="#111" /></Icon>
    </StartButton>
    <SearchBox>
      <Icon w={14}><circle cx="8.500" cy="5.500" r="4.500" stroke="#333" /><path d="M5 9 .5 13.500" stroke="#333" strokeWidth="1.200" /></Icon>
      <input aria-label="Type here to search" placeholder="Type here to search" />
      <Books />
    </SearchBox>
    <TaskButton $w={41} aria-label="Task view">
      <Icon w={14} h={13}><path d="M0 1.500h9M0 11.500h9M1.500 1.500v10M8.500 1.500v10M1.500 4h7M1.500 9h7M12 1v2M12 5v8" stroke="#333" strokeWidth="1.200" /></Icon>
    </TaskButton>
    <AppRow>
      {apps.map(([name, Art, open, active]) => (
        <TaskButton key={name} aria-label={name} $open={open} $active={active}><Art /></TaskButton>
      ))}
    </AppRow>
    <Tray>
      <Weather>
        <Icon w={20} h={20} stroke="none">
          <path d="M13 4c-1 5-5 9-12 9 2 5 8 7 12 4s4-9 0-13z" fill="#f2a02e" />
          <circle cx="14" cy="5" r="5" fill="#c8322b" />
          <text x="14" y="8" textAnchor="middle" fill="#fff" fontSize="7">3</text>
        </Icon>
        {"32°C  Clear"}
      </Weather>
      <TrayButton aria-label="Hidden icons"><Icon w={10} h={6}><path d="M0 5.500l5-5 5 5" strokeWidth="1.200" /></Icon></TrayButton>
      <TrayButton aria-label="Microphone"><Icon w={10} h={13}><rect x="2.500" y=".5" width="5" height="8" rx="2" fill="#111" /><path d="M.5 6v2q0 2.500 4.500 2.500T9.500 8V6M5 10v3" stroke="#111" /></Icon></TrayButton>
      <TrayButton aria-label="Network"><Icon w={12} h={12}><path d="M1 11C1 5 5 1 11 1M4 11c0-4 3-7 7-7M7 11c0-2 2-4 4-4" /><circle cx="10.500" cy="10.500" r="1" fill="currentColor" /></Icon></TrayButton>
      <TrayButton aria-label="Volume"><Icon w={14} h={12}><path d="M.5 4v4H2l3 3V1L2 4zM7 4q1.500 2 0 4M9 2.500q3 3.500 0 7M11 1q4 5 0 10" /></Icon></TrayButton>
      <Clock>8:30 PM<br />3/5/2026</Clock>
      <TrayButton aria-label="Notifications"><Icon w={14} h={13} stroke="none"><path d="M0 0h14v10H9l-2 3-2-3H0z" fill="#111" /><path d="M3 3.500h8M3 6.500h8" stroke="#ddd" /></Icon></TrayButton>
    </Tray>
  </TaskBar>
);

export default function App() {
  return (
    <>
      <GlobalStyle />
      <Page>
        <TopBar />
        <RibbonBar />
        <WorkArea />
        <Status />
        <WindowsBar />
      </Page>
    </>
  );
}
